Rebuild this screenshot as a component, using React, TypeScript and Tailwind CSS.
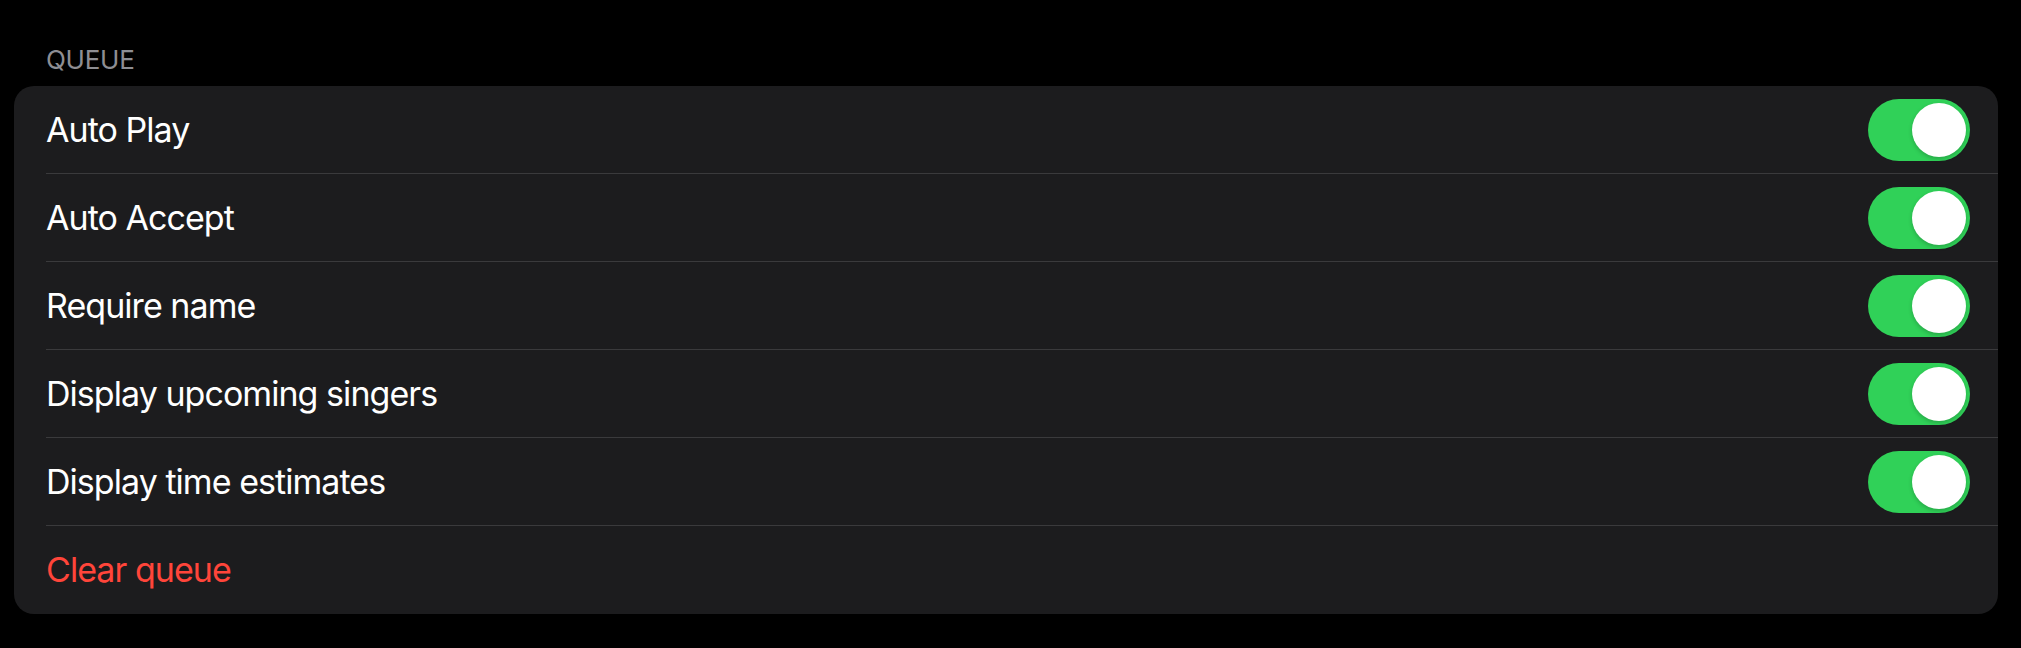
import { useState } from "react"

const rows = [
	"Auto Play",
	"Auto Accept",
	"Require name",
	"Display upcoming singers",
	"Display time estimates",
]

function Toggle({ on, onChange }: { on: boolean; onChange: () => void }) {
	return (
		<button
			type="button"
			onClick={onChange}
			className={`flex h-[62px] w-[102px] shrink-0 items-center rounded-full p-1 ${on ? "justify-end bg-[#30d158]" : "justify-start bg-[#39393d]"}`}
		>
			<span className="size-[54px] rounded-full bg-white shadow-[0_2px_4px_rgba(0,0,0,0.2)]" />
		</button>
	)
}

export default function App() {
	const [values, setValues] = useState(rows.map(() => true))

	return (
		<div className="min-h-screen bg-black pt-[44px] pr-[23px] pb-[34px] pl-[14px] font-['Inter',sans-serif] text-white">
			<p className="m-0 pl-[32px] text-[26px] leading-[32px] tracking-[-0.01em] text-[#8e8e93]">QUEUE</p>
			<div className="mt-[10px] overflow-hidden rounded-[20px] bg-[#1c1c1e]">
				{rows.map((label, i) => (
					<div key={label} className="pl-[32px]">
						<div className="flex h-[88px] items-center justify-between border-b border-[#3a3a3c] pr-[28px]">
							<span className="text-[34px] leading-none tracking-[-0.028em]">{label}</span>
							<Toggle
								on={values[i]}
								onChange={() => setValues((v) => v.map((x, j) => (j === i ? !x : x)))}
							/>
						</div>
					</div>
				))}
				<button
					type="button"
					className="flex h-[88px] w-full items-center pl-[32px] text-left text-[34px] leading-none tracking-[-0.028em] text-[#ff453a]"
				>
					Clear queue
				</button>
			</div>
		</div>
	)
}
